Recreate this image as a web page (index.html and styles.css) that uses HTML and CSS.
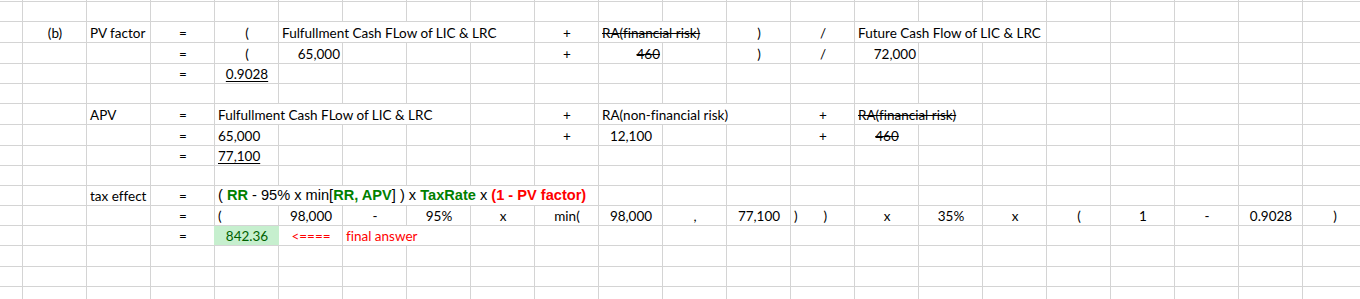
FILE: index.html
```html
<!DOCTYPE html>
<html>
<head>
<meta charset="utf-8">
<link rel="stylesheet" href="styles.css">
</head>
<body>
<div class="sheet">
  <div class="row h2"></div>
  <div class="row h20"></div>
  <div class="row h21">
    <div class="cell col-b center">(b)</div>
    <div class="cell col-c">PV factor</div>
    <div class="cell col-d center">=</div>
    <div class="cell col-e center">(</div>
    <div class="cell col-f span4">Fulfullment Cash FLow of LIC &amp; LRC</div>
    <div class="cell col-j center">+</div>
    <div class="cell col-k span2"><span class="strike">RA(financial risk)</span></div>
    <div class="cell col-m center">)</div>
    <div class="cell col-n center">/</div>
    <div class="cell col-o span3">Future Cash Flow of LIC &amp; LRC</div>
  </div>
  <div class="row h21">
    <div class="cell col-d center">=</div>
    <div class="cell col-e center">(</div>
    <div class="cell col-f right">65,000</div>
    <div class="cell col-j center">+</div>
    <div class="cell col-k right"><span class="strike">460</span></div>
    <div class="cell col-m center">)</div>
    <div class="cell col-n center">/</div>
    <div class="cell col-o right">72,000</div>
  </div>
  <div class="row h20">
    <div class="cell col-d center">=</div>
    <div class="cell col-e center"><span class="under">0.9028</span></div>
  </div>
  <div class="row h20"></div>
  <div class="row h21">
    <div class="cell col-c">APV</div>
    <div class="cell col-d center">=</div>
    <div class="cell col-e span4">Fulfullment Cash FLow of LIC &amp; LRC</div>
    <div class="cell col-j center">+</div>
    <div class="cell col-k span3">RA(non-financial risk)</div>
    <div class="cell col-n center">+</div>
    <div class="cell col-o span2"><span class="strike">RA(financial risk)</span></div>
  </div>
  <div class="row h21">
    <div class="cell col-d center">=</div>
    <div class="cell col-e">65,000</div>
    <div class="cell col-j center">+</div>
    <div class="cell col-k center">12,100</div>
    <div class="cell col-n center">+</div>
    <div class="cell col-o center"><span class="strike">460</span></div>
  </div>
  <div class="row h20">
    <div class="cell col-d center">=</div>
    <div class="cell col-e"><span class="under">77,100</span></div>
  </div>
  <div class="row h20"></div>
  <div class="row h20">
    <div class="cell col-c">tax effect</div>
    <div class="cell col-d center">=</div>
    <div class="cell col-e span6 formula"><span>( <b class="g">RR</b> - 95% x min[<b class="g">RR, APV</b>] ) x <b class="g">TaxRate</b> x <b class="r">(1 - PV factor)</b></span></div>
  </div>
  <div class="row h20">
    <div class="cell col-d center">=</div>
    <div class="cell col-e">(</div>
    <div class="cell col-f center">98,000</div>
    <div class="cell col-g center">-</div>
    <div class="cell col-h center">95%</div>
    <div class="cell col-i center">x</div>
    <div class="cell col-j center">min(</div>
    <div class="cell col-k center">98,000</div>
    <div class="cell col-l center">,</div>
    <div class="cell col-m center">77,100</div>
    <div class="cell col-n"><span>)</span><span class="gap">)</span></div>
    <div class="cell col-o center">x</div>
    <div class="cell col-p center">35%</div>
    <div class="cell col-q center">x</div>
    <div class="cell col-r center">(</div>
    <div class="cell col-s center">1</div>
    <div class="cell col-t center">-</div>
    <div class="cell col-u center">0.9028</div>
    <div class="cell col-v center">)</div>
  </div>
  <div class="row h20">
    <div class="cell col-d center">=</div>
    <div class="cell col-e center good">842.36</div>
    <div class="cell col-f center red">&lt;====</div>
    <div class="cell col-g span2 red">final answer</div>
  </div>
  <div class="row h21"></div>
  <div class="row h20"></div>
  <div class="row h13"></div>
</div>
</body>
</html>
```
FILE: styles.css
```css
html, body {
  margin: 0;
  padding: 0;
  background: #ffffff;
  overflow: hidden;
}

.sheet {
  width: 1360px;
  height: 299px;
  overflow: hidden;
  font-family: Lato, "Open Sans", sans-serif;
  font-size: 13.5px;
  font-variant-ligatures: none;
  color: #000000;
}

.row {
  display: grid;
  grid-template-columns: 23px repeat(21, 64px);
  box-sizing: border-box;
  border-bottom: 1px solid #d4d4d4;
  background-image: linear-gradient(to right, transparent 63px, #d4d4d4 63px);
  background-size: 64px 100%;
  background-position: 23px 0;
}

.h2 { height: 2px; }
.h13 { height: 13px; border-bottom: 0; }
.h20 { height: 20px; }
.h21 { height: 21px; }

.cell {
  box-sizing: border-box;
  border-right: 1px solid #d4d4d4;
  background: #ffffff;
  padding: 0 2px 0 3px;
  white-space: nowrap;
  overflow: hidden;
  display: flex;
  align-items: flex-end;
  line-height: 18px;
}

.center { justify-content: center; }
.right { justify-content: flex-end; }

.col-b { grid-column-start: 2; }
.col-c { grid-column-start: 3; }
.col-d { grid-column-start: 4; }
.col-e { grid-column-start: 5; }
.col-f { grid-column-start: 6; }
.col-g { grid-column-start: 7; }
.col-h { grid-column-start: 8; }
.col-i { grid-column-start: 9; }
.col-j { grid-column-start: 10; }
.col-k { grid-column-start: 11; }
.col-l { grid-column-start: 12; }
.col-m { grid-column-start: 13; }
.col-n { grid-column-start: 14; }
.col-o { grid-column-start: 15; }
.col-p { grid-column-start: 16; }
.col-q { grid-column-start: 17; }
.col-r { grid-column-start: 18; }
.col-s { grid-column-start: 19; }
.col-t { grid-column-start: 20; }
.col-u { grid-column-start: 21; }
.col-v { grid-column-start: 22; }

.span2 { grid-column-end: span 2; }
.span3 { grid-column-end: span 3; }
.span4 { grid-column-end: span 4; }
.span6 { grid-column-end: span 6; }

.strike { text-decoration: line-through; }
.under { text-decoration: underline; text-underline-offset: 2px; }

.gap { margin-left: 26px; }

.formula {
  font-family: "Liberation Sans", Arial, sans-serif;
  font-size: 14.6px;
  padding-bottom: 1px;
}
.formula b { font-weight: bold; }
.g { color: #008000; }
.r { color: #ff0000; }

.red { color: #ff0000; }

.good {
  background: #c6efce;
  color: #006100;
  border-right-color: #c6efce;
  box-shadow: -1px 0 0 #c6efce;
}
```
